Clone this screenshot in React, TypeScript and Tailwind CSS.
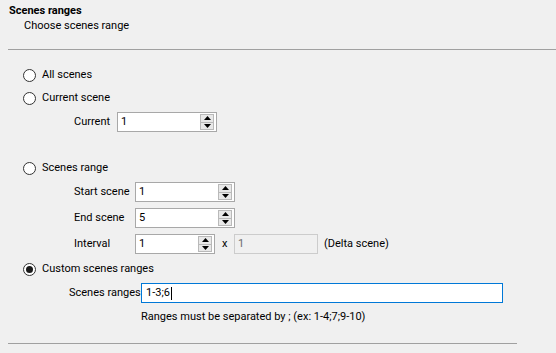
import React from "react";

const font = { fontFamily: "Roboto, 'Liberation Sans', sans-serif" };

function Radio({ checked, label }: { checked?: boolean; label: string }) {
  return (
    <div className="flex h-[20px] items-center pl-[23px]">
      <div className="flex h-[13px] w-[13px] shrink-0 items-center justify-center rounded-full border border-[#333333] bg-white">
        {checked && <div className="h-[7px] w-[7px] rounded-full bg-[#1a1a1a]" />}
      </div>
      <span className="ml-[6px] whitespace-nowrap">{label}</span>
    </div>
  );
}

function Arrow({ up }: { up?: boolean }) {
  return (
    <svg width="7" height="4" viewBox="0 0 7 4">
      {up ? <polygon points="0,4 7,4 3.5,0" fill="#000" /> : <polygon points="0,0 7,0 3.5,4" fill="#000" />}
    </svg>
  );
}

function Spin({ value, width }: { value: string; width: string }) {
  return (
    <div className={`flex h-[20px] ${width} shrink-0 items-center border border-[#a8a8a8] bg-white`}>
      <span className="flex-1 pl-[3px]">{value}</span>
      <div className="mr-[2px] flex h-[16px] w-[14px] flex-col border border-[#b9b9b9] bg-[#e8e8e8]">
        <div className="flex flex-1 items-center justify-center border-b border-[#b9b9b9]">
          <Arrow up />
        </div>
        <div className="flex flex-1 items-center justify-center">
          <Arrow />
        </div>
      </div>
    </div>
  );
}

export default function App() {
  return (
    <div className="h-[353px] w-[556px] overflow-hidden bg-[#f0f0f0] text-[11px] leading-[14px] text-black" style={font}>
      <div className="pl-[9px] pt-[4px]">
        <div className="font-bold">Scenes ranges</div>
        <div className="ml-[15px] mt-[1px]">Choose scenes range</div>
      </div>
      <div className="ml-[8px] mt-[16px] h-px bg-[#a0a0a0]" />

      <div className="mt-[15px] flex flex-col">
        <Radio label="All scenes" />
        <div className="mt-[3px]">
          <Radio label="Current scene" />
        </div>
        <div className="mt-[4px] flex items-center pl-[74px]">
          <span className="w-[43px] shrink-0 whitespace-nowrap">Current</span>
          <Spin value="1" width="w-[100px]" />
        </div>

        <div className="mt-[26px]">
          <Radio label="Scenes range" />
        </div>
        <div className="mt-[4px] flex items-center pl-[74px]">
          <span className="w-[61px] shrink-0 whitespace-nowrap">Start scene</span>
          <Spin value="1" width="w-[100px]" />
        </div>
        <div className="mt-[6px] flex items-center pl-[74px]">
          <span className="w-[61px] shrink-0 whitespace-nowrap">End scene</span>
          <Spin value="5" width="w-[100px]" />
        </div>
        <div className="mt-[6px] flex items-center pl-[74px]">
          <span className="w-[61px] shrink-0 whitespace-nowrap">Interval</span>
          <Spin value="1" width="w-[80px]" />
          <span className="ml-[7px] w-[12px] shrink-0">x</span>
          <div className="flex h-[20px] w-[84px] shrink-0 items-center border border-[#cccccc] bg-[#f0f0f0] pl-[3px] text-[#6d6d6d]">
            1
          </div>
          <span className="ml-[6px] whitespace-nowrap">(Delta scene)</span>
        </div>

        <div className="mt-[5px]">
          <Radio checked label="Custom scenes ranges" />
        </div>
        <div className="mt-[4px] flex items-center pl-[69px]">
          <span className="w-[72px] shrink-0 whitespace-nowrap">Scenes ranges</span>
          <div className="flex h-[20px] w-[362px] shrink-0 items-center border border-[#0078d7] bg-white pl-[4px]">
            <span>1-3;6</span>
            <span className="ml-[1px] h-[13px] w-px bg-black" />
          </div>
        </div>
        <div className="mt-[7px] whitespace-nowrap pl-[141px]">Ranges must be separated by ; (ex: 1-4;7;9-10)</div>
      </div>
      <div className="ml-[8px] mt-[19px] h-px w-[509px] bg-[#a0a0a0]" />
    </div>
  );
}
